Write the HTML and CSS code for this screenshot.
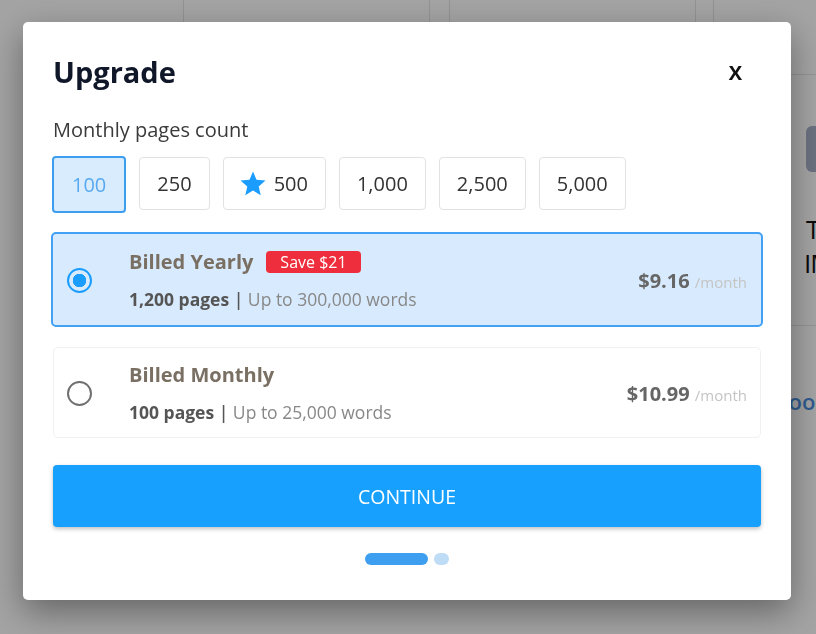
FILE: index.html
```html
<!DOCTYPE html>
<html lang="en">
<head>
  <meta charset="UTF-8">
  <meta name="viewport" content="width=device-width, initial-scale=1.0">
  <title>Upgrade</title>
  <link rel="stylesheet" href="styles.css">
</head>
<body>
  <!-- page behind the dialog -->
  <div class="page">
    <div class="page-header">
      <div class="col col-a"></div>
      <div class="col col-b"></div>
      <div class="col col-c"></div>
      <div class="col col-d"></div>
      <div class="col col-e"></div>
      <div class="col col-f"></div>
    </div>
    <div class="page-body">
      <div class="side">
        <div class="side-btn"></div>
        <div class="side-title">
          <span class="line-1">Try</span>
          <span class="line-2">IMPORT</span>
        </div>
        <div class="side-link">Book</div>
      </div>
    </div>
  </div>

  <div class="overlay">
    <div class="modal">
      <div class="modal-header">
        <h1>Upgrade</h1>
        <button class="close">X</button>
      </div>

      <div class="label">Monthly pages count</div>
      <div class="counts">
        <button class="count active">100</button>
        <button class="count">250</button>
        <button class="count">
          <svg class="star" viewBox="0 0 24 24" width="30" height="30"><path d="M12 17.27L18.18 21l-1.64-7.03L22 9.24l-7.19-.61L12 2 9.19 8.63 2 9.24l5.46 4.73L5.82 21z"/></svg>
          500
        </button>
        <button class="count">1,000</button>
        <button class="count">2,500</button>
        <button class="count">5,000</button>
      </div>

      <div class="plans">
        <div class="plan active">
          <span class="radio"></span>
          <div class="plan-info">
            <div class="plan-title">Billed Yearly <span class="badge">Save $21</span></div>
            <div class="plan-sub"><strong>1,200 pages</strong> <span class="sep">|</span> Up to 300,000 words</div>
          </div>
          <div class="price">$9.16 <span>/month</span></div>
        </div>
        <div class="plan">
          <span class="radio"></span>
          <div class="plan-info">
            <div class="plan-title">Billed Monthly</div>
            <div class="plan-sub"><strong>100 pages</strong> <span class="sep">|</span> Up to 25,000 words</div>
          </div>
          <div class="price">$10.99 <span>/month</span></div>
        </div>
      </div>

      <button class="continue">CONTINUE</button>

      <div class="steps">
        <span class="step current"></span>
        <span class="step"></span>
      </div>
    </div>
  </div>
</body>
</html>
```

FILE: styles.css
```css
html, body {
  margin: 0;
  height: 100%;
  overflow: hidden;
}
body {
  font-family: "Open Sans", "Noto Sans", sans-serif;
  background: #fff;
  color: #333;
}

/* background page */
.page-header {
  display: flex;
  height: 75px;
}
.col {
  border-left: 1px solid #e4e4e4;
}
.col-a { width: 183px; border-left: none; }
.col-b { width: 245px; }
.col-c { width: 19px; }
.col-d { width: 245px; }
.col-e { width: 17px; }
.col-f { flex: 1; border-bottom: 1px solid #e6e6e6; }
.page-body {
  display: flex;
  justify-content: flex-end;
}
.side {
  width: 26px;
  padding-top: 51px;
}
.side-btn {
  width: 40px;
  height: 46px;
  margin-left: 16px;
  border-radius: 6px;
  background: #a8b0c8;
}
.side-title {
  display: flex;
  flex-direction: column;
  margin-top: 40px;
  font-size: 26px;
  line-height: 34px;
  color: #111;
  white-space: nowrap;
  padding-bottom: 45px;
  border-bottom: 1px solid #e6e6e6;
}
.side-title .line-1 { padding-left: 16px; }
.side-title .line-2 { padding-left: 14px; letter-spacing: -1px; }
.side-link {
  margin-top: 60px;
  margin-left: -16px;
  font-size: 22px;
  font-weight: 600;
  color: #4a8ee0;
  white-space: nowrap;
}

/* dialog */
.overlay {
  position: fixed;
  inset: 0;
  background: rgba(0, 0, 0, 0.36);
  display: flex;
  align-items: flex-start;
  padding: 22px 0 0 23px;
}
.modal {
  width: 708px;
  padding: 32px 30px 35px;
  background: #fff;
  border-radius: 5px;
  box-shadow: 0 12px 34px rgba(0, 0, 0, 0.38);
}
.modal-header {
  display: flex;
  justify-content: space-between;
  align-items: center;
}
h1 {
  margin: 0;
  font-size: 29px;
  line-height: 36px;
  font-weight: 700;
  color: #0f1729;
}
.close {
  border: none;
  background: none;
  padding: 0 19px 0 0;
  font-family: inherit;
  font-size: 20px;
  font-weight: 700;
  color: #111;
  cursor: pointer;
}

.label {
  margin-top: 27px;
  font-size: 20px;
  line-height: 26px;
  color: #3a3a3a;
}
.counts {
  display: flex;
  align-items: flex-start;
  gap: 13px;
  margin: 13px 0 0 -1px;
}
.count {
  display: flex;
  align-items: center;
  gap: 6px;
  height: 53px;
  margin-top: 1px;
  padding: 0 17px;
  border: 1px solid #e2e2e2;
  border-radius: 4px;
  background: #fff;
  font-family: inherit;
  font-size: 20px;
  color: #333;
  cursor: pointer;
}
.count.active {
  height: 57px;
  margin-top: 0;
  padding: 0 18px;
  border: 2px solid #3d9ef0;
  background: #d9ecfe;
  color: #58a9f0;
}
.star {
  fill: #1a9dff;
  margin-left: -3px;
}

.plans {
  display: flex;
  flex-direction: column;
  gap: 22px;
  margin-top: 21px;
}
.plan {
  display: flex;
  align-items: center;
  padding: 14px 13px 13px 13px;
  border: 1px solid #f1f1f1;
  border-radius: 5px;
  background: #fff;
}
.plan.active {
  margin: -2px;
  padding: 15px 14px 14px 14px;
  border: 2px solid #42a1f5;
  background: #d8eafd;
}
.radio {
  box-sizing: border-box;
  width: 25px;
  height: 25px;
  border: 2px solid #707070;
  border-radius: 50%;
  flex-shrink: 0;
}
.plan.active .radio {
  border-color: #1a9dff;
  background: radial-gradient(circle, #1a9dff 0 6.5px, transparent 7px);
}
.plan-info {
  flex: 1;
  margin-left: 37px;
}
.plan-title {
  display: flex;
  align-items: center;
  gap: 13px;
  font-size: 20px;
  line-height: 26px;
  font-weight: 700;
  color: #7a6f63;
}
.badge {
  font-size: 16px;
  line-height: 22px;
  font-weight: 400;
  color: #fff;
  background: #ee2e3c;
  border-radius: 4px;
  padding: 0 14px;
}
.plan-sub {
  margin-top: 12px;
  font-size: 17.5px;
  line-height: 24px;
  color: #888;
}
.plan-sub strong {
  color: #555;
}
.sep {
  color: #555;
  font-weight: 600;
}
.price {
  font-size: 20px;
  font-weight: 700;
  color: #666;
}
.price span {
  font-size: 15px;
  font-weight: 400;
  color: #c4c4c4;
}

.continue {
  display: block;
  width: 100%;
  height: 62px;
  margin-top: 27px;
  border: none;
  border-radius: 4px;
  background: #18a0ff;
  box-shadow: 0 2px 4px rgba(0, 0, 0, 0.25);
  font-family: inherit;
  font-size: 19.5px;
  color: #fff;
  cursor: pointer;
}
.steps {
  display: flex;
  justify-content: center;
  gap: 6px;
  margin-top: 26px;
}
.step {
  width: 15px;
  height: 12px;
  border-radius: 6px;
  background: #bedcf6;
}
.step.current {
  width: 63px;
  background: #3e9ff0;
}
```
